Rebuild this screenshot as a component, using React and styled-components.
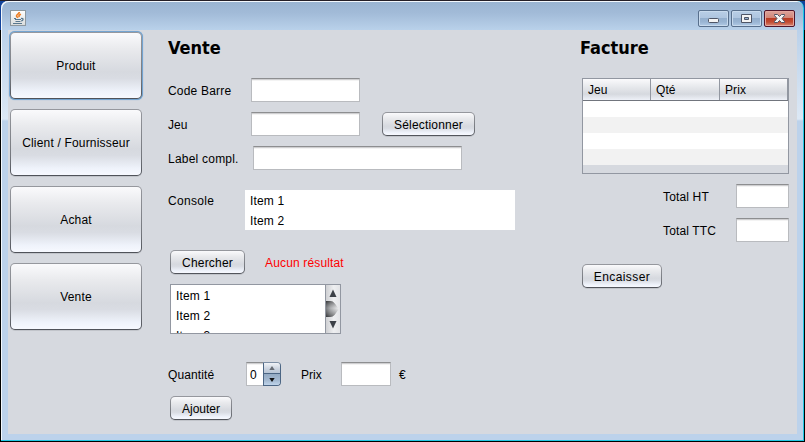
import React from "react";
import styled, { createGlobalStyle, css } from "styled-components";

const Global = createGlobalStyle`
  * { box-sizing: border-box; }
  body { margin: 0; background: #000; overflow: hidden; }
`;

const Desktop = styled.div`
  width: 805px;
  height: 442px;
  padding: 1px;
  background: linear-gradient(#12439a 0 30px, #000 30px);
  font: 12px/16px "Liberation Sans", Arial, sans-serif;
  color: #000;
  box-shadow: inset 0 1px 0 #241f26;
`;

const Frame = styled.div`
  width: 803px;
  height: 440px;
  padding: 1px 6px 6px 7px;
  border: solid #21c8e4;
  border-width: 0 1px 1px 0;
  border-radius: 7px 7px 0 0;
  background:
    linear-gradient(#99b4d1 0, #a2bbd8 12px, #b9d1ea 29px, transparent 29px),
    linear-gradient(#bad1ea 0, #bad1ea 28px, #dce8f5 118px, #bcd2eb 120px);
  box-shadow: inset 1px 1px 0 #f3f8fd;
`;

const TitleBar = styled.header`
  height: 28px;
  display: flex;
  justify-content: space-between;
  padding: 8px 2px 0 2px;
`;

const WindowControls = styled.div`
  display: flex;
  gap: 2px;
`;

const ControlButton = styled.button`
  width: 31px;
  height: 17px;
  padding: 0;
  display: grid;
  place-items: center;
  border: 1px solid ${(p) => (p.$close ? "#50152a" : "#586f8c")};
  border-radius: 2px;
  background: ${(p) =>
    p.$close
      ? "linear-gradient(#dba39b 0, #d28577 7px, #b93a23 7px, #c14b32 11px, #d98a78)"
      : "linear-gradient(#b9cee6 0, #aec5df 7px, #93aecd 7px, #9ab5d3 11px, #b1cae5)"};
  box-shadow: inset 0 0 0 1px ${(p) => (p.$close ? "#e5a79e" : "#c8daed")};
`;

const Client = styled.main`
  height: 404px;
  width: 789px;
  display: grid;
  grid-template-columns: 160px 412px 209px;
  background: #d6d9df;
`;

const Sidebar = styled.nav`
  display: flex;
  flex-direction: column;
  gap: 10px;
  padding: 2px 0 0 2px;
`;

const Button = styled.button`
  flex: none;
  width: ${(p) => p.$w}px;
  height: ${(p) => (p.$large ? 67 : 24)}px;
  padding: 1px 0 0;
  font: inherit;
  color: inherit;
  white-space: nowrap;
  letter-spacing: ${(p) => p.$ls || 0}px;
  border: 1px solid transparent;
  border-radius: 5px;
  background:
    linear-gradient(#fafafc 0, #e9eaed 25%, #d6d9df 60%, #d9dce3 70%, #eff3fb 90%, #f7f9ff) padding-box,
    linear-gradient(#96989e, #75787e 70%, #4f5259) border-box;
  box-shadow: ${(p) => (p.$focused ? "0 0 0 1px #73a4d1, 0 0 1px 1px #73a4d1" : "0 1px 0 #c1c4ca")};
`;

const Form = styled.section`
  display: flex;
  flex-direction: column;
`;

const Heading = styled.h1`
  margin: 0;
  height: 48px;
  padding-top: 8px;
  font: bold 18px/20px "DejaVu Sans Condensed", "DejaVu Sans", sans-serif;
  font-stretch: condensed;
`;

const Row = styled.div`
  display: flex;
  align-items: center;
  height: ${(p) => p.$h || 24}px;
  margin-bottom: ${(p) => p.$mb ?? 10}px;
  padding-left: ${(p) => p.$indent || 0}px;
`;

const Label = styled.label`
  flex: none;
  width: ${(p) => p.$w}px;
  padding-top: 2px;
  white-space: nowrap;
  letter-spacing: ${(p) => p.$ls || 0}px;
  ${(p) => p.$raised && css`padding-bottom: 20px;`}
`;

const ErrorMessage = styled(Label)`
  margin-left: 20px;
  color: #ff0000;
`;

const fieldStyle = css`
  border: 1px solid #b9bbbf;
  border-top-color: #8d8e90;
  background: linear-gradient(#cfcfd1 0 1px, #f3f3f3 1px 2px, #fff 2px);
`;

const Field = styled.input`
  ${fieldStyle}
  flex: none;
  width: ${(p) => p.$w}px;
  height: 24px;
  padding: 0 5px;
  border-radius: 0;
  outline: none;
  margin-right: ${(p) => p.$mr || 0}px;
`;

const Items = styled.ul`
  list-style: none;
  margin: 0;
  padding: 1px 0 0 5px;
  flex: 1;
  height: 100%;
  overflow: hidden;
  background: #fff;
  line-height: 20px;
  letter-spacing: 0.15px;
`;

const ConsoleList = styled(Items)`
  flex: none;
  width: 270px;
  height: 40px;
`;

const ScrollList = styled.div`
  width: 171px;
  height: 50px;
  display: flex;
  border: 1px solid #9297a1;
`;

const ScrollBar = styled.div`
  width: 15px;
  border-left: 1px solid #9297a1;
  background: linear-gradient(90deg, #cfd0d3, #eeeff1 55%, #e3e4e7);
`;

const Spinner = styled.div`
  display: flex;
  width: 35px;
  height: 24px;
  margin-right: 20px;
`;

const SpinnerValue = styled.span`
  ${fieldStyle}
  width: 17px;
  border-right: 0;
  padding: 1px 0 0 3px;
  line-height: 22px;
`;

const SpinnerArrows = styled.div`
  width: 18px;
  display: grid;
  grid-template-rows: 10px 12px;
  border-radius: 0 4px 4px 0;
  overflow: hidden;
  border: 1px solid #4c6684;
  border-top-color: #7d8fa5;
  height: 24px;
`;

const SpinnerArrow = styled.div`
  display: grid;
  place-items: center;
  background: ${(p) =>
    p.$down ? "linear-gradient(#93aac3, #a6bbd2 60%, #bfd4ea)" : "linear-gradient(#f0f3f7, #c9d2de 60%, #b8c6d6)"};
  ${(p) => p.$down && css`border-top: 1px solid #4c6684;`}
`;

const Invoice = styled.section`
  display: flex;
  flex-direction: column;
`;

const Table = styled.div`
  margin: 0 0 10px 2px;
  width: 207px;
  height: 96px;
  border: 1px solid #9297a1;
`;

const HeaderRow = styled.div`
  display: grid;
  grid-template-columns: 68px 69px 68px;
  height: 22px;
  border-bottom: 1px solid #71757d;
  background: linear-gradient(#fafafc, #e3e5e9 45%, #d6d9df 72%, #eef1f8);
`;

const HeaderCell = styled.div`
  padding: 1px 0 0 5px;
  line-height: 20px;
  letter-spacing: 0.1px;
  border-right: 1px solid #9297a1;
`;

const TableRow = styled.div`
  height: 16px;
  background: ${(p) => (p.$odd ? "#f2f2f2" : "#fff")};
`;

const JavaIcon = () => (
  <svg width="16" height="16" viewBox="0 0 16 16">
    <defs>
      <linearGradient id="tile" x1="0" y1="0" x2="0" y2="1">
        <stop offset="0" stopColor="#fff" />
        <stop offset="1" stopColor="#d9dcdc" />
      </linearGradient>
    </defs>
    <rect x=".5" y=".5" width="15" height="15" fill="url(#tile)" stroke="#8d989f" />
    <path d="M9.3 2C9.6 4 6 4.2 6.5 6.2L7.8 7.8M11 4.2C8.7 5 8.6 5.8 9.3 7.2" fill="none" stroke="#ed7d22" strokeWidth="1.6" />
    <path d="M4 8.5H6M5 9.5H11M11 8.5C14 8 13.6 10.6 11 11M5.5 11.5H10.5M3 13.5H12" fill="none" stroke="#58788f" strokeWidth="1.2" />
  </svg>
);

const controls = {
  minimize: <rect x="2.5" y="5.5" width="10" height="4" rx="1" />,
  maximize: <path fillRule="evenodd" d="M2.5 1.5h10v8h-10zM5.5 4.5v2h4v-2z" />,
  close: <path d="M2.5 1.5h3l2 2 2-2h3v1l-2.5 3 2.5 3v1h-3l-2-2-2 2h-3v-1l2.5-3-2.5-3z" />,
};

const ControlGlyph = ({ kind }) => (
  <svg width="15" height="11" viewBox="0 0 15 11" fill="#f4f4f4" stroke="#4e5566">
    {controls[kind]}
  </svg>
);

const Triangle = ({ down, color }) => (
  <svg width="6" height="4" viewBox="0 0 6 4">
    <path d={down ? "M.3 0h5.4L3 4z" : "M.3 4h5.4L3 0z"} fill={color} />
  </svg>
);

const ScrollDrawing = () => (
  <svg width="14" height="48" viewBox="0 0 14 48">
    <defs>
      <linearGradient id="thumb">
        <stop offset="0" stopColor="#43464b" />
        <stop offset=".35" stopColor="#8f9194" />
        <stop offset="1" stopColor="#e9eaec" />
      </linearGradient>
      <linearGradient id="shade" x1="0" y1="0" x2="0" y2="1">
        <stop offset="0" stopColor="#222" stopOpacity=".45" />
        <stop offset=".45" stopColor="#fff" stopOpacity=".3" />
        <stop offset="1" stopColor="#222" stopOpacity=".45" />
      </linearGradient>
    </defs>
    <path d="M3.5 12h7l-3.5-7.5z" fill="#3c4047" />
    <path d="M0 16H4C8 16 9 19 13 24C9 29 8 32 4 32H0z" fill="url(#thumb)" />
    <path d="M0 16H4C8 16 9 19 13 24C9 29 8 32 4 32H0z" fill="url(#shade)" />
    <path d="M3.5 36h7L7 43.5z" fill="#3c4047" />
  </svg>
);

const menu = ["Produit", "Client / Fournisseur", "Achat", "Vente"];

export default function App() {
  return (
    <Desktop>
      <Global />
      <Frame>
        <TitleBar>
          <JavaIcon />
          <WindowControls>
            <ControlButton><ControlGlyph kind="minimize" /></ControlButton>
            <ControlButton><ControlGlyph kind="maximize" /></ControlButton>
            <ControlButton $close><ControlGlyph kind="close" /></ControlButton>
          </WindowControls>
        </TitleBar>
        <Client>
          <Sidebar>
            {menu.map((name, i) => (
              <Button key={name} $w={132} $large $focused={i === 0} $ls={0.18}>{name}</Button>
            ))}
          </Sidebar>
          <Form>
            <Heading>Vente</Heading>
            <Row><Label $w={83} $ls={0.2}>Code Barre</Label><Field $w={109} /></Row>
            <Row>
              <Label $w={83}>Jeu</Label><Field $w={109} $mr={22} />
              <Button $w={93} $ls={0.2}>Sélectionner</Button>
            </Row>
            <Row $mb={20}><Label $w={85} $ls={0.22}>Label compl.</Label><Field $w={209} /></Row>
            <Row $h={40} $mb={20}>
              <Label $w={77} $ls={0.3} $raised>Console</Label>
              <ConsoleList><li>Item 1</li><li>Item 2</li></ConsoleList>
            </Row>
            <Row $indent={2}>
              <Button $w={75} $ls={0.2}>Chercher</Button>
              <ErrorMessage $w={90} $ls={0.15}>Aucun résultat</ErrorMessage>
            </Row>
            <Row $h={50} $mb={28} $indent={2}>
              <ScrollList>
                <Items><li>Item 1</li><li>Item 2</li><li>Item 3</li></Items>
                <ScrollBar><ScrollDrawing /></ScrollBar>
              </ScrollList>
            </Row>
            <Row>
              <Label $w={78} $ls={0.1}>Quantité</Label>
              <Spinner>
                <SpinnerValue>0</SpinnerValue>
                <SpinnerArrows>
                  <SpinnerArrow><Triangle color="#666b73" /></SpinnerArrow>
                  <SpinnerArrow $down><Triangle down color="#111" /></SpinnerArrow>
                </SpinnerArrows>
              </Spinner>
              <Label $w={40}>Prix</Label><Field $w={50} $mr={8} />
              <Label $w={10}>€</Label>
            </Row>
            <Row $indent={2}><Button $w={62}>Ajouter</Button></Row>
          </Form>
          <Invoice>
            <Heading>Facture</Heading>
            <Table>
              <HeaderRow>
                <HeaderCell>Jeu</HeaderCell><HeaderCell>Qté</HeaderCell><HeaderCell>Prix</HeaderCell>
              </HeaderRow>
              <TableRow /><TableRow $odd /><TableRow /><TableRow $odd />
            </Table>
            <Row $indent={83}><Label $w={73} $ls={0.15}>Total HT</Label><Field $w={53} /></Row>
            <Row $indent={83} $mb={22}><Label $w={73} $ls={0.15}>Total TTC</Label><Field $w={53} /></Row>
            <Row $indent={2}><Button $w={80} $ls={0.4}>Encaisser</Button></Row>
          </Invoice>
        </Client>
      </Frame>
    </Desktop>
  );
}
